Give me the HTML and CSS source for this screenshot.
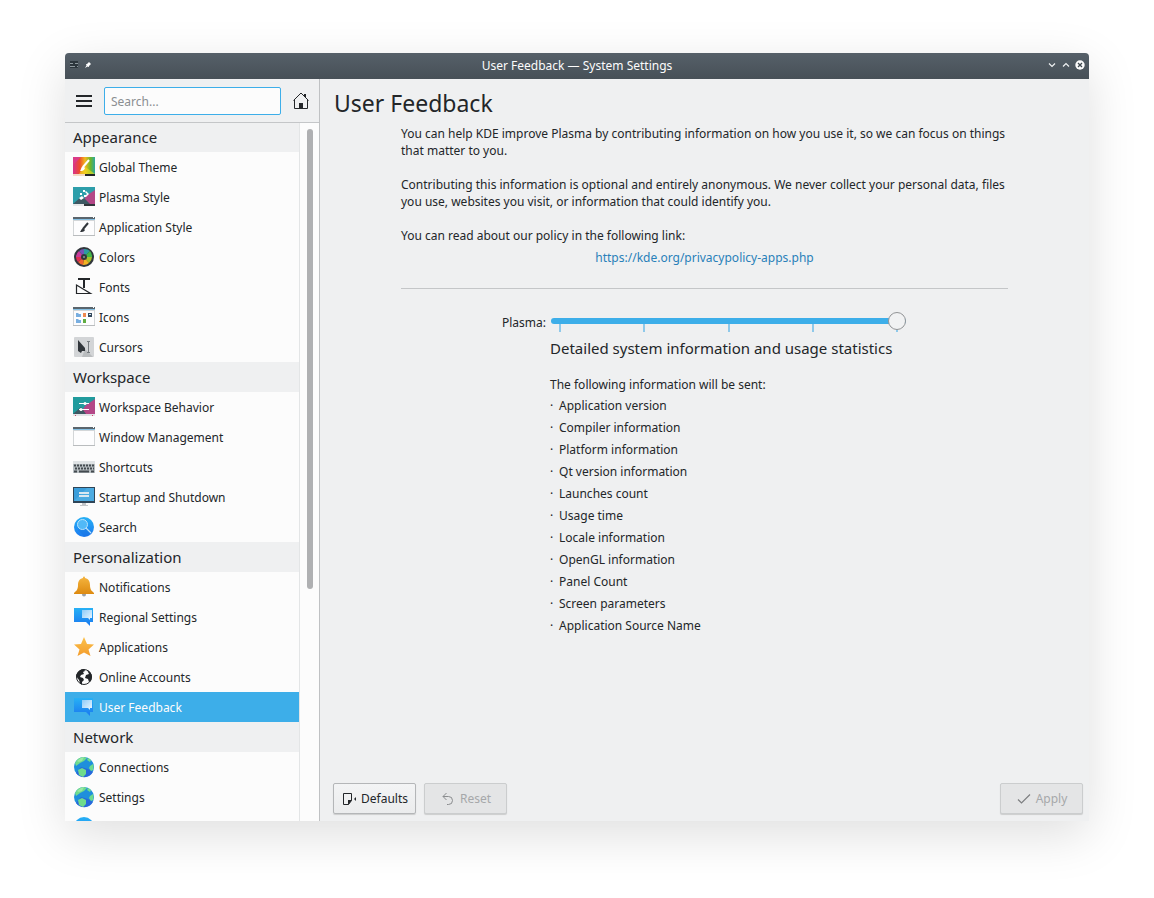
FILE: index.html
```html
<!DOCTYPE html>
<html lang="en">
<head>
<meta charset="UTF-8" />
<meta name="viewport" content="width=device-width, initial-scale=1" />
<title>User Feedback — System Settings</title>
<link rel="stylesheet" href="styles.css">
</head>
<body>

<!-- Shared gradients and symbols -->
<svg class="defs" width="0" height="0" aria-hidden="true">
  <defs>
    <linearGradient id="rainbow" x1="0" y1="0" x2="1" y2="0">
      <stop offset="0" stop-color="#d6338f" /><stop offset=".3" stop-color="#ee4a2c" />
      <stop offset=".55" stop-color="#f2b91d" /><stop offset=".8" stop-color="#6bb52c" />
      <stop offset="1" stop-color="#2ca7a0" />
    </linearGradient>
    <linearGradient id="bell" x1="0" y1="0" x2="0" y2="1">
      <stop offset="0" stop-color="#f5b53f" /><stop offset="1" stop-color="#dd8a10" />
    </linearGradient>
    <linearGradient id="blue" x1="0" y1="0" x2="0" y2="1">
      <stop offset="0" stop-color="#27b1f5" /><stop offset="1" stop-color="#1a79f0" />
    </linearGradient>
    <linearGradient id="pale" x1="0" y1="0" x2="1" y2="1">
      <stop offset="0" stop-color="#8fcbf8" /><stop offset="1" stop-color="#eef8ff" />
    </linearGradient>
    <linearGradient id="star" x1="0" y1="0" x2="0" y2="1">
      <stop offset="0" stop-color="#fbc24c" /><stop offset="1" stop-color="#f39c2c" />
    </linearGradient>
  </defs>
  <symbol id="i-bubbles" viewBox="0 0 22 22">
    <path fill="url(#blue)" d="M1 2h19v14h-3v4l-4-4H1z" />
    <path fill="url(#pale)" d="M9 4h10v8h-2v2l-2-2H9z" />
  </symbol>
  <symbol id="i-globe" viewBox="0 0 22 22">
    <circle cx="11" cy="11" r="10" fill="#1f8fdc" />
    <path fill="#2869db" d="M3 17l5-6 7 2 5 3a10 10 0 0 1-17 1z" />
    <path fill="#6fdc8c" d="M2 7a10 10 0 0 1 9-6l3 1-3 3-4 2-4 3zM15 2a10 10 0 0 1 3 2l-1 2-3-2zM17 10l3-2a9 9 0 0 1 0 6l-2 1-2-3zM5 14l4-2 4 2v4l-3 3-4-2z" />
    <path fill="#9ae8a2" d="M4 5l4-3 3-1-2 4-3 1z" />
  </symbol>
  <symbol id="i-window" viewBox="0 0 22 22">
    <path fill="#d3d6d8" d="M0 1h22v19H0z" /><path fill="#fdfdfe" d="M1 5h20v14H1z" />
    <path fill="#5a656d" d="M0 1h22v2H0z" /><path fill="#85bfe2" d="M0 3h22v1H0z" />
    <path fill="#fff" d="M20 1h1v1h-1z" /><path fill="#b9bcbe" d="M0 19h22v1H0z" />
  </symbol>
</svg>

<div class="window">
  <header class="titlebar">
    <span class="title-left">
      <svg width="10" height="10" viewBox="0 0 10 10"><path fill="#2d363d" d="M1 1h8v7H1z" /><path stroke="#8f999f" d="M1 3.500h3M6 3.500h3M1 6.500h5M8 6.500h1" /></svg>
      <svg width="8" height="8" viewBox="0 0 8 8"><path fill="#fff" d="M5 1l2 2-1 1-1 1v1L3.500 5.500 1 7 2.500 4.500 2 3h1l1-1z" /></svg>
    </span>
    <h1>User Feedback — System Settings</h1>
    <span class="title-right">
      <button aria-label="Minimize"><svg width="10" height="10" viewBox="0 0 10 10"><path fill="none" stroke="#f0f2f3" stroke-width="1.200" d="M2 3.500l3 3 3-3" /></svg></button>
      <button aria-label="Maximize"><svg width="10" height="10" viewBox="0 0 10 10"><path fill="none" stroke="#f0f2f3" stroke-width="1.200" d="M2 6.500l3-3 3 3" /></svg></button>
      <button aria-label="Close"><svg width="10" height="10" viewBox="0 0 10 10"><circle cx="5" cy="5" r="4.700" fill="#fcfcfc" /><path stroke="#3f484f" stroke-width="1.300" d="M3 3l4 4M7 3L3 7" /></svg></button>
    </span>
  </header>

  <div class="content">
    <aside class="sidebar">
      <div class="toolbar">
        <button aria-label="Menu"><svg width="16" height="16" viewBox="0 0 16 16"><path stroke="#232629" stroke-width="2" d="M0 3h16M0 8h16M0 13h16" /></svg></button>
        <input type="text" placeholder="Search..." aria-label="Search">
        <button aria-label="Home"><svg width="16" height="18" viewBox="0 0 16 18"><path fill="none" stroke="#232629" d="M.5 8.500L8 1l7.500 7.500M1.500 8v8.500h13V8" /><path fill="#232629" d="M6 11h4v5H6zM11 2h2v4l-2-2z" /></svg></button>
      </div>
      <div class="side-body">
        <nav class="list">
          <h2>Appearance</h2>
          <a href="#"><svg viewBox="0 0 22 22"><path fill="url(#rainbow)" d="M0 1h22v17H0z" /><path fill="#da3b88" d="M0 1h8L0 9z" /><path fill="#f0e020" opacity=".6" d="M11 10l11 8H6z" /><path fill="#f4d9c5" d="M0 18h12v2H0z" /><path fill="#232629" d="M12 18h10v2H12z" /><path stroke="#fff" stroke-width="2" d="M16 4l-6 7" /><path fill="#fff" d="M10 10l2 2c-1 3-3 3-5 3 1-1 1-4 3-5z" /></svg>Global Theme</a>
          <a href="#"><svg viewBox="0 0 22 22"><path fill="#2d9eaa" d="M0 1h22v19H0z" /><path fill="#b34787" d="M22 4v14H9l4-8z" /><path fill="#3e5963" d="M0 18l9-8 8 8z" /><path fill="#e7e8e9" d="M0 18h11v2H0z" /><path fill="#31363b" d="M11 18h11v2H11z" /><path fill="#fff" d="M10 4h2v2h-2zM13 5l3 3-3 3-1-1 2-2-2-2zM7 7h2v2H7zM11 9h2v2h-2zM6 12l3-2 2 2-3 2z" /></svg>Plasma Style</a>
          <a href="#"><svg viewBox="0 0 22 22"><use href="#i-window" /><path stroke="#31363b" stroke-width="2" d="M15 7l-5 6" /><path fill="#31363b" d="M10 12l2 2c-1 2-3 2-5 2 1-1 1-3 3-4z" /></svg>Application Style</a>
          <a href="#"><svg viewBox="0 0 22 22"><circle cx="11" cy="11" r="10" fill="#31363b" /><path fill="#c83b9b" d="M11 11L3 11a8 8 0 0 1 3-6z" /><path fill="#7354b6" d="M11 11L6 5a8 8 0 0 1 5-2z" /><path fill="#2d9ba0" d="M11 11V3a8 8 0 0 1 6 2z" /><path fill="#42b649" d="M11 11l6-6a8 8 0 0 1 2 6z" /><path fill="#a6bd2b" d="M11 11h8a8 8 0 0 1-3 6z" /><path fill="#f4b321" d="M11 11l5 6a8 8 0 0 1-6 2z" /><path fill="#ee632f" d="M11 11l-1 8a8 8 0 0 1-5-3z" /><path fill="#df2f55" d="M11 11l-6 5a8 8 0 0 1-2-5z" /><circle cx="11" cy="11" r="3" fill="#31363b" /><circle cx="11" cy="11" r="1" fill="#7c9c98" /></svg>Colors</a>
          <a href="#"><svg viewBox="0 0 22 22"><path fill="#232629" d="M5 2h12v2h-5v8h-2V4H5z" /><path fill="none" stroke="#232629" stroke-width="1.200" d="M3.500 9v8.500h14z" /></svg>Fonts</a>
          <a href="#"><svg viewBox="0 0 22 22"><use href="#i-window" /><path fill="#78aee0" d="M3 7h2l1 1h2v3H3zM3 13h2l1 1h2v3H3z" /><path fill="#ef8a51" d="M10 7h3v4h-3z" /><path fill="#60ad42" d="M10 13h3v4h-3z" /><path fill="#34495e" d="M15 7h4v4h-4z" /><path fill="#d6e4ee" d="M16 8h2v1h-2z" /></svg>Icons</a>
          <a href="#"><svg viewBox="0 0 22 22"><rect x="1" y="1" width="20" height="20" rx="1" fill="#d3d5d7" /><path fill="#b9bcbe" d="M12 13l8 8H9z" /><path fill="#31363b" d="M5 4l7 8v3H9l-1 2-3-2z" /><path fill="none" stroke="#777c80" d="M14 5.500h3M14 16.500h3M15.500 6v10" /></svg>Cursors</a>
          <h2>Workspace</h2>
          <a href="#"><svg viewBox="0 0 22 22"><path fill="#219b9d" d="M0 1h22v17H0z" /><path fill="#b34787" d="M22 3v15H7l5-8z" /><path fill="#3e5963" d="M0 18l8-7 5 7z" /><path fill="#e1e4e7" d="M0 18h22v2H0z" /><path fill="#d14668" d="M2 19h1v1H2zM19 19h1v1h-1z" /><path stroke="#fff" d="M6 7.500h10M6 13.500h10" /><circle cx="12" cy="7.500" r="1.500" fill="#fff" /><circle cx="8" cy="13.500" r="1.500" fill="#fff" /></svg>Workspace Behavior</a>
          <a href="#"><svg viewBox="0 0 22 22"><use href="#i-window" /></svg>Window Management</a>
          <a href="#"><svg viewBox="0 0 22 22"><path fill="#b8bfc3" d="M0 5h22v12H0z" /><path fill="#dfe3e5" d="M0 5h22v3H0z" /><path stroke="#434a4f" stroke-width="2" stroke-dasharray="2 1" d="M1 9.500h20M2 12.500h19" /><path stroke="#434a4f" stroke-width="2" d="M1 15.500h3M6 15.500h10M18 15.500h3" /></svg>Shortcuts</a>
          <a href="#"><svg viewBox="0 0 22 22"><path fill="#2f4557" d="M0 1h22v16H0z" /><path fill="#3b9edb" d="M1 2h20v13H1z" /><path fill="#4cabe1" d="M1 15L14 2h7v13z" /><path fill="#d9e8f1" d="M6 6h10v2H6zM6 9h10v2H6z" /><path fill="#c3c6c9" d="M9 17h4v2h2v1H7v-1h2z" /></svg>Startup and Shutdown</a>
          <a href="#"><svg viewBox="0 0 22 22"><circle cx="11" cy="11" r="10" fill="url(#blue)" /><path fill="#1662d4" opacity=".25" d="M13 12l7 4a10 10 0 0 1-8 5l-7-7z" /><circle cx="9.500" cy="8.500" r="5" fill="#51b9f7" stroke="#b9e2fb" /><path stroke="#b9e2fb" stroke-width="1.200" d="M13 12l5 5" /></svg>Search</a>
          <h2>Personalization</h2>
          <a href="#"><svg viewBox="0 0 22 22"><circle cx="11" cy="18.500" r="2" fill="#9a9fa3" /><path fill="url(#bell)" d="M10 2c0-2 2-2 2 0 4 1 5 4 5 7 0 5 2 6 4 8v1H1v-1c2-2 4-3 4-8 0-3 1-6 5-7z" /></svg>Notifications</a>
          <a href="#"><svg viewBox="0 0 22 22"><use href="#i-bubbles" /></svg>Regional Settings</a>
          <a href="#"><svg viewBox="0 0 22 22"><path fill="url(#star)" d="M11 1l3 7 7 .5-5.500 5L17.500 20 11 16.500 4.500 20l2-6.500L1 8.500 8 8z" /></svg>Applications</a>
          <a href="#"><svg viewBox="0 0 22 22"><circle cx="11" cy="11" r="7.500" fill="none" stroke="#232629" /><path fill="#232629" d="M3 10c1-4 4-7 8-7l1 2-2 1 1 2-3 1-1 2 3 1 1 2-2 2v3l-2-2-1-3zM14 4c3 1 5 4 5 7l-1 4-2 1-1-3-3-1 1-3 3-1z" /></svg>Online Accounts</a>
          <a href="#" class="active" aria-current="page"><svg viewBox="0 0 22 22"><use href="#i-bubbles" /></svg>User Feedback</a>
          <h2>Network</h2>
          <a href="#"><svg viewBox="0 0 22 22"><use href="#i-globe" /></svg>Connections</a>
          <a href="#"><svg viewBox="0 0 22 22"><use href="#i-globe" /></svg>Settings</a>
          <a href="#" aria-label="Connectivity"><svg viewBox="0 0 22 22"><circle cx="11" cy="11" r="10" fill="url(#blue)" /></svg></a>
        </nav>
        <div class="scrollbar" aria-hidden="true"><div class="scroll-thumb"></div></div>
      </div>
    </aside>

    <main>
      <h2 class="page-title">User Feedback</h2>
      <div class="page">
        <p>You can help KDE improve Plasma by contributing information on how you use it, so we can focus on things that matter to you.</p>
        <p>Contributing this information is optional and entirely anonymous. We never collect your personal data, files you use, websites you visit, or information that could identify you.</p>
        <p>You can read about our policy in the following link:</p>
        <a class="policy" href="https://kde.org/privacypolicy-apps.php">https://kde.org/privacypolicy-apps.php</a>
        <hr>
        <div class="feedback">
          <label for="plasma">Plasma:</label>
          <div class="level">
            <div class="slider">
              <div class="ticks" aria-hidden="true"><i></i><i></i><i></i><i></i><i></i></div>
              <input type="range" id="plasma" min="0" max="4" value="4">
            </div>
            <h3>Detailed system information and usage statistics</h3>
            <div class="sent">The following information will be sent:</div>
            <ul>
              <li>Application version</li>
              <li>Compiler information</li>
              <li>Platform information</li>
              <li>Qt version information</li>
              <li>Launches count</li>
              <li>Usage time</li>
              <li>Locale information</li>
              <li>OpenGL information</li>
              <li>Panel Count</li>
              <li>Screen parameters</li>
              <li>Application Source Name</li>
            </ul>
          </div>
        </div>
      </div>

      <footer>
        <button><svg width="16" height="16" viewBox="0 0 16 16"><path fill="none" stroke="#232629" d="M2.500 2.500h8v7l-3 4h-5z" /><path fill="#232629" d="M7 9h4l-4 5zM15 6v4l-2-2z" /></svg>Defaults</button>
        <button disabled><svg width="16" height="16" viewBox="0 0 16 16"><path fill="none" stroke="#8a8c8e" d="M6.500 2L3 5.500 6.500 9M3 5.500h5.500a4 4 0 0 1 0 8H7" /></svg>Reset</button>
        <button disabled class="apply"><svg width="16" height="16" viewBox="0 0 16 16"><path fill="none" stroke="#7d7f81" stroke-width="1.200" d="M2 8.500L5.500 12 14 3.500" /></svg>Apply</button>
      </footer>
    </main>
  </div>
</div>

</body>
</html>
```

FILE: styles.css
```css
* {
  box-sizing: border-box;
}

body {
  margin: 0;
  height: 100vh;
  padding: 53px 65px 77px;
  background: #fff;
  color: #232629;
  font-family: "Noto Sans", sans-serif;
  font-size: 12px;
  line-height: 17px;
}

h1, h2, h3, p, ul {
  margin: 0;
  padding: 0;
  font-weight: 400;
}

button, input {
  font: inherit;
  color: inherit;
}

svg {
  display: block;
  flex: none;
}

.defs {
  position: absolute;
}

/* Window frame */
.window {
  display: flex;
  flex-direction: column;
  height: 100%;
  min-height: 480px;
  border-radius: 4px 4px 0 0;
  background: #eff0f1;
  box-shadow: 0 14px 50px rgba(0, 0, 0, 0.13);
  overflow: hidden;
}

.titlebar {
  display: grid;
  grid-template-columns: 1fr auto 1fr;
  align-items: center;
  height: 26px;
  padding: 0 4px 2px;
  background: linear-gradient(#566069, #475057);
  color: #fcfcfc;
}

.titlebar h1 {
  font-size: 12px;
}

.title-left, .title-right {
  display: flex;
  align-items: center;
  gap: 4px;
}

.title-left {
  gap: 5px;
}

.title-right {
  justify-content: flex-end;
}

.titlebar button, .toolbar button {
  padding: 0;
  border: none;
  background: none;
}

.content {
  display: flex;
  flex: 1;
  min-height: 0;
}

/* Sidebar */
.sidebar {
  display: flex;
  flex-direction: column;
  width: 255px;
  flex: none;
  border-right: 1px solid #bfc1c3;
}

.toolbar {
  display: flex;
  align-items: center;
  gap: 12px;
  height: 44px;
  padding: 0 10px 0 11px;
  border-bottom: 1px solid #c4c6c8;
}

.toolbar input {
  flex: 1;
  min-width: 0;
  height: 28px;
  padding: 1px 6px 0;
  border: 1px solid #3daee9;
  border-radius: 2px;
  background: #fcfcfc;
  outline: none;
}

.toolbar input::placeholder {
  color: #8b8e91;
}

.side-body {
  display: flex;
  flex: 1;
  min-height: 0;
  background: #fcfcfc;
}

.list {
  flex: 1;
  overflow: hidden;
}

.list h2 {
  height: 30px;
  padding: 0 8px;
  background: #eff0f1;
  font-size: 15px;
  line-height: 30px;
}

.list h2:first-child {
  height: 29px;
  line-height: 29px;
}

.list a {
  display: flex;
  align-items: center;
  gap: 4px;
  height: 30px;
  padding: 0 8px;
  color: #232629;
  text-decoration: none;
}

.list svg {
  width: 22px;
  height: 22px;
}

.list .active {
  background: #3daee9;
  color: #fcfcfc;
}

.scrollbar {
  width: 20px;
  padding: 6px 6px 6px 7px;
  border-left: 1px solid #e3e5e6;
}

.scroll-thumb {
  width: 6px;
  height: 67%;
  border-radius: 3px;
  background: #afb0b2;
}

/* Main page */
main {
  display: flex;
  flex: 1;
  flex-direction: column;
  min-width: 0;
}

.page-title {
  padding: 6px 14px 0;
  font-size: 23px;
  line-height: 36px;
}

.page {
  flex: 1;
  width: 100%;
  max-width: 607px;
  margin: 4px auto 0;
}

.page p {
  margin-bottom: 17px;
}

.page p:nth-of-type(3) {
  margin-bottom: 5px;
}

.policy {
  display: block;
  color: #2980b9;
  text-align: center;
  text-decoration: none;
}

hr {
  margin: 22px 0;
  border: none;
  border-top: 1px solid #c4c6c8;
}

.feedback {
  display: flex;
  gap: 4px;
  padding-left: 101px;
}

.feedback label {
  margin-top: 3px;
}

/* Slider: the tick marks share the grid cell with the range input */
.slider {
  display: grid;
  width: 356px;
  height: 22px;
  padding: 1px 0 0 1px;
}

.slider > * {
  grid-area: 1 / 1;
}

input[type="range"] {
  appearance: none;
  z-index: 1;
  width: 100%;
  height: 18px;
  margin: 0;
  background: none;
}

input[type="range"]::-webkit-slider-runnable-track {
  height: 6px;
  border-radius: 3px;
  background: #3daee9;
}

input[type="range"]::-webkit-slider-thumb {
  appearance: none;
  width: 18px;
  height: 18px;
  margin-top: -6px;
  border: 1px solid #929496;
  border-radius: 50%;
  background: #f1f2f3;
}

.ticks {
  display: flex;
  justify-content: space-between;
  padding: 12px 8px 0;
}

.ticks i {
  width: 2px;
  height: 8px;
  background: #8fc9ea;
}

.level h3 {
  margin: 5px 0 18px;
  font-size: 15px;
  line-height: 20px;
}

.sent {
  margin-bottom: 2px;
}

ul {
  list-style: none;
}

li {
  line-height: 22px;
}

li::before {
  content: "·";
  display: inline-block;
  width: 9px;
}

/* Bottom buttons */
footer {
  display: flex;
  gap: 8px;
  padding: 0 6px 7px 13px;
}

footer button {
  display: flex;
  align-items: center;
  justify-content: center;
  gap: 4px;
  min-width: 83px;
  height: 31px;
  padding: 0 6px;
  border: 1px solid #b4b6b8;
  border-radius: 2px;
  background: linear-gradient(#f3f4f5, #ebeced);
  box-shadow: 0 1px 1px rgba(0, 0, 0, 0.15);
}

footer button:disabled {
  border-color: #cbcdce;
  background: #e4e5e6;
  color: #a6a8aa;
}

footer .apply {
  margin-left: auto;
}
```
